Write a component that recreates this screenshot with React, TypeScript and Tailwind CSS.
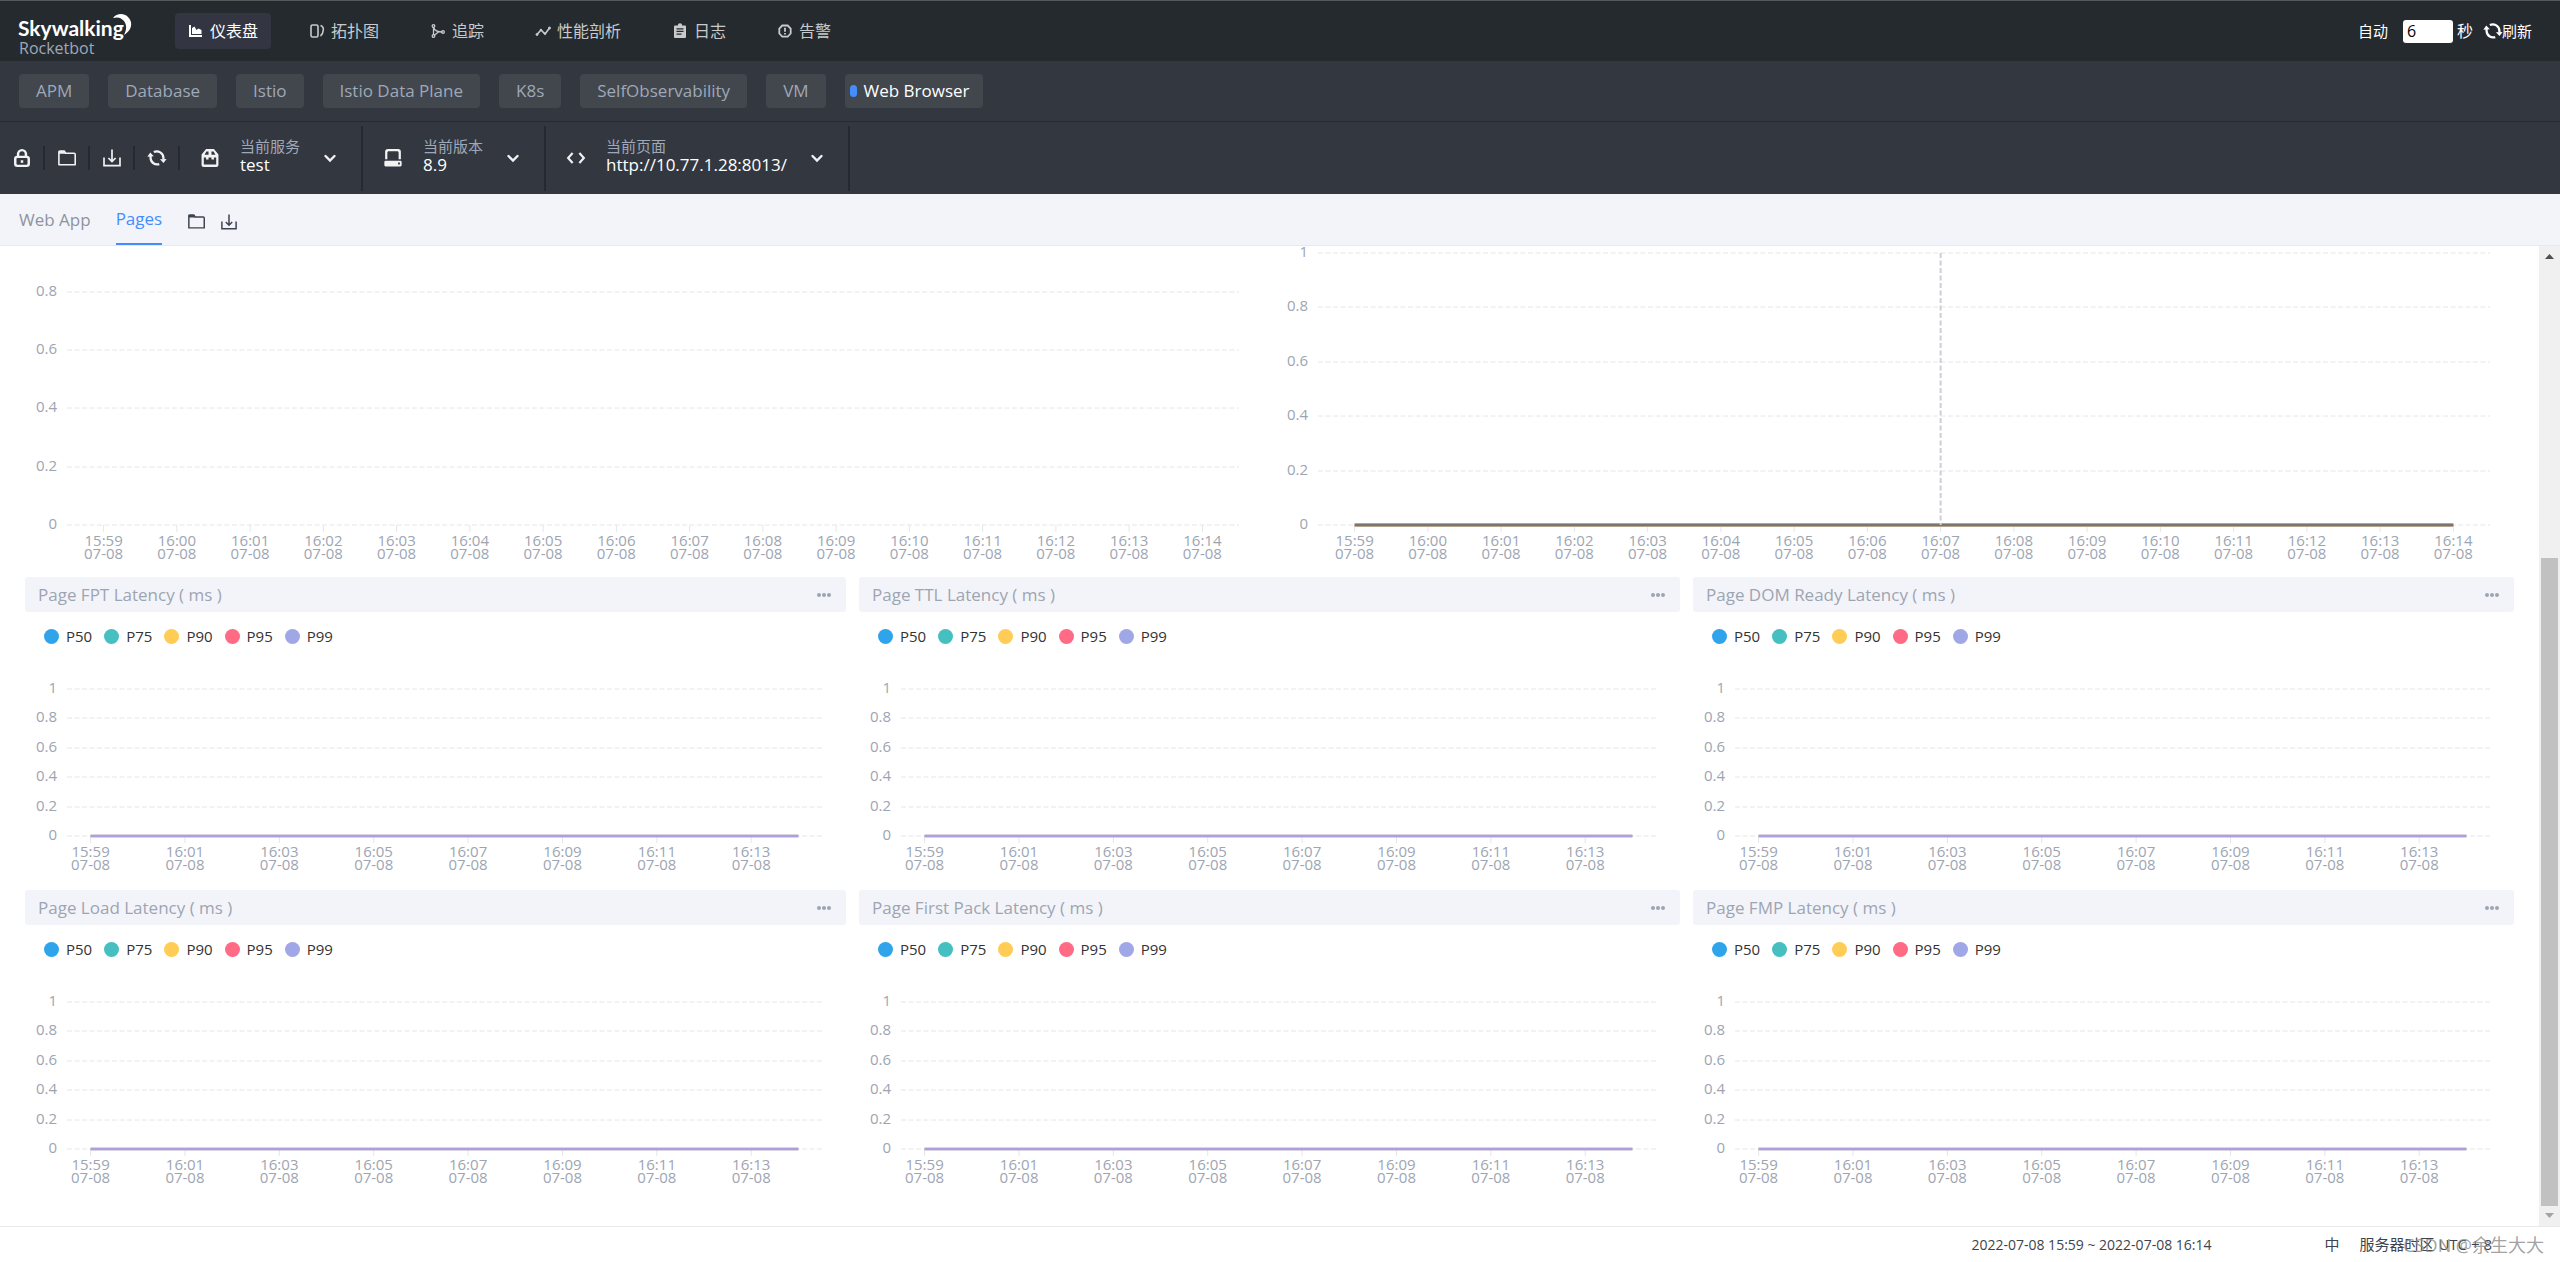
import type { ReactNode } from "react";

const NAV_ITEMS = [
  { label: "仪表盘", icon: "chart", active: true },
  { label: "拓扑图", icon: "topology" },
  { label: "追踪", icon: "trace" },
  { label: "性能剖析", icon: "profile" },
  { label: "日志", icon: "log" },
  { label: "告警", icon: "alarm" },
];

const GROUPS = ["APM", "Database", "Istio", "Istio Data Plane", "K8s", "SelfObservability", "VM", "Web Browser"];

const LEGEND = [
  { name: "P50", color: "bg-[#30a4eb]" },
  { name: "P75", color: "bg-[#45bfc0]" },
  { name: "P90", color: "bg-[#ffcc55]" },
  { name: "P95", color: "bg-[#ff6a84]" },
  { name: "P99", color: "bg-[#a0a7e6]" },
];

const LATENCY_CARDS = [
  "Page FPT Latency ( ms )",
  "Page TTL Latency ( ms )",
  "Page DOM Ready Latency ( ms )",
  "Page Load Latency ( ms )",
  "Page First Pack Latency ( ms )",
  "Page FMP Latency ( ms )",
];

const TIMES = [
  "15:59", "16:00", "16:01", "16:02", "16:03", "16:04", "16:05", "16:06",
  "16:07", "16:08", "16:09", "16:10", "16:11", "16:12", "16:13", "16:14",
];

const ICONS: Record<string, ReactNode> = {
  chart: (
    <g fill="currentColor">
      <path d="M1 2h2v10h11v2H1z" />
      <path d="M4 11V5l2.500 -1.500L8.500 7l2-1.500L13.500 7v4z" />
    </g>
  ),
  topology: (
    <g fill="none" stroke="currentColor" strokeWidth="1.600">
      <rect x="2" y="2" width="7" height="12" rx="1.500" />
      <path d="M11.500 2.500c2.500 .8 3 2.500 2.800 4.500c-.2 2.500-.8 4.500-2.800 6" />
    </g>
  ),
  trace: (
    <g fill="none" stroke="currentColor" strokeWidth="1.300">
      <path d="M3.500 4v8M3.500 4.500c1 3 5 4.500 9 4.500M9 8.500L4 12.500" />
      <circle cx="3.500" cy="3" r="1.300" />
      <circle cx="3.500" cy="13" r="1.300" />
      <circle cx="13" cy="9" r="1.300" />
    </g>
  ),
  profile: (
    <g stroke="currentColor" fill="currentColor">
      <path d="M2 11.500L6 7l4 4 4.500-6" fill="none" strokeWidth="1.600" />
      <circle cx="2" cy="11.500" r="1" />
      <circle cx="6" cy="7" r=".8" />
      <circle cx="10" cy="10.500" r=".8" />
      <circle cx="14.500" cy="5" r="1" />
    </g>
  ),
  log: (
    <path
      fill="currentColor"
      fillRule="evenodd"
      d="M3.200 2.500h2.600a2.200 2.200 0 0 1 4.400 0h2.600c.8 0 1.200.5 1.200 1.200v10c0 .8-.5 1.300-1.200 1.300H3.200c-.8 0-1.200-.5-1.200-1.300v-10c0-.7.5-1.200 1.200-1.200zM4.500 5.200v1.300h7V5.200zm0 2.600v1.300h7V7.800zm0 2.700v1.300h5v-1.300z"
    />
  ),
  alarm: (
    <g fill="none" stroke="currentColor" strokeWidth="1.800">
      <path d="M5.300 2.500h5.400l3 3v5l-3 3.200H5.300l-3-3.200v-5z" />
      <path d="M8 4.800v4M8 10v1.600" />
    </g>
  ),
  lock: (
    <g fill="none" stroke="currentColor" strokeWidth="2.200">
      <rect x="2" y="7" width="12" height="8" rx="1.800" />
      <path d="M4.500 7V4.500a3.500 3.500 0 0 1 7 0v2.500" />
      <path d="M8 10v2.300" />
    </g>
  ),
  folder: (
    <g>
      <path d="M.8 14V2.800c0-.8.3-1 1-1h3.700l1.300 2h7.500c.6 0 1 .3 1 1V14z" fill="none" stroke="currentColor" strokeWidth="1.400" strokeLinejoin="round" />
      <path d="M.8 1.800h4.700l1.300 2.400H.8z" fill="currentColor" />
    </g>
  ),
  download: (
    <g fill="none" stroke="currentColor" strokeWidth="1.500">
      <path d="M.9 7.500V14.800h14.200V7.500M8 .5v10.500M4.800 8L8 11.200 11.200 8" />
    </g>
  ),
  refresh: (
    <g fill="none" stroke="currentColor" strokeWidth="2">
      <path d="M2.300 5.500v2.500a5.800 5.800 0 0 0 7.700 5.400M5.200 2.700a5.900 5.900 0 0 1 8.500 5.300v1.200" />
      <path d="M-.6 6.800L2 3l3.200 3.400zM10.600 9.200l5.900-.4-2.700 3.700z" fill="currentColor" stroke="none" />
    </g>
  ),
  service: (
    <path
      fill="currentColor"
      fillRule="evenodd"
      d="M4.500 0h7l4 4.800V14c0 1.200-.7 2-2 2h-11c-1.300 0-2-.8-2-2V4.800zM4.800 2.200L3.200 5h3.500V2.200zm4.500 0V5h3.500l-1.600-2.800zM2.500 7.500v6.200h11V7.500H11.500v1.800H9.300V7.500H6.700v1.800H4.500V7.500z"
    />
  ),
  version: (
    <path
      fill="currentColor"
      fillRule="evenodd"
      d="M3.500 0h9A2.500 2.500 0 0 1 15 2.500V9h-2V3.500c0-1-.4-1.500-1.300-1.500H4.300C3.400 2 3 2.500 3 3.500V9H1V2.500A2.500 2.500 0 0 1 3.500 0zM1.500 10.500h13c.8 0 1.200.5 1.200 1.200v2.600c0 .8-.4 1.200-1.200 1.200h-13c-.8 0-1.200-.4-1.200-1.200v-2.600c0-.7.4-1.200 1.200-1.200zm11 1.500v1.800h1.600V12z"
    />
  ),
  code: <path d="M5 3.500L1 8l4 4.500M11 3.500L15 8l-4 4.500" fill="none" stroke="currentColor" strokeWidth="1.900" />,
  chevron: <path d="M3.500 6L8 10.500 12.500 6" fill="none" stroke="currentColor" strokeWidth="2.400" strokeLinecap="round" />,
};

function Icon({ name, className = "size-4" }: { name: string; className?: string }) {
  return (
    <svg viewBox="0 0 16 16" className={`shrink-0 overflow-visible ${className}`} aria-hidden="true">
      {ICONS[name]}
    </svg>
  );
}

function Logo() {
  return (
    <div className="w-[156px] shrink-0 pl-[19px]">
      <svg width="116" height="33" viewBox="0 0 116 33" className="block overflow-visible" aria-label="Skywalking">
        <text x="-1" y="29" className="fill-white font-['Lato'] text-[21px] font-bold">Skywalking</text>
        <path d="M94 11C97 7 104 5 109 10C115 16 112 24 105 28C108 22 108 17 104 13C101 10 98 10 94 11z" fill="#fff" />
      </svg>
      <div className="text-base leading-4 text-[#9fa8b8]">Rocketbot</div>
    </div>
  );
}

function Header() {
  return (
    <header className="flex h-[61px] items-center border-t border-[#54595c] bg-[#252a2f] pr-7">
      <Logo />
      <nav className="ml-[19px] flex gap-[25px]">
        {NAV_ITEMS.map((item) => (
          <a
            key={item.label}
            href="#"
            className={`flex h-9 items-center gap-[6px] rounded px-[13px] text-base ${
              item.active ? "bg-[#333642] text-white" : "text-[#c8cacb]"
            }`}
          >
            <Icon name={item.icon} />
            {item.label}
          </a>
        ))}
      </nav>
      <div className="ml-auto flex items-center text-[15px] text-white">
        <button className="mr-[15px]">自动</button>
        <input
          type="text"
          defaultValue="6"
          aria-label="自动刷新间隔"
          className="h-[23px] w-[50px] rounded-[3px] bg-white px-1 text-base text-black"
        />
        <span className="ml-1 text-base">秒</span>
        <button className="ml-[11px] flex items-center">
          <Icon name="refresh" className="size-[18px]" />
          刷新
        </button>
      </div>
    </header>
  );
}

function GroupBar() {
  return (
    <div className="flex h-[61px] gap-[19px] border-b border-[#252a2f] bg-[#333840] px-[19px] pt-[13px] text-[17px]">
      {GROUPS.map((group) =>
        group === "Web Browser" ? (
          <button key={group} className="flex h-[34px] items-center gap-[7px] rounded bg-[#42464d] pr-[13px] pl-[5px] text-white">
            <span className="h-3 w-[7px] rounded-full bg-[#448dfe]" />
            {group}
          </button>
        ) : (
          <button key={group} className="h-[34px] rounded bg-[#42464d] px-[17px] text-[#9fa8b8]">
            {group}
          </button>
        )
      )}
    </div>
  );
}

function Selector({ icon, label, value }: { icon: string; label: string; value: string }) {
  return (
    <button className="flex h-[65px] items-center border-r-2 border-[#252a2f] pr-[23px] pl-[21px] text-left">
      <Icon name={icon} className="size-[18px] text-[#f2f2f2]" />
      <span className="ml-[21px] flex min-w-[60px] flex-col pb-1">
        <span className="text-[15px] leading-[18px] text-[#9fa8b8]">{label}</span>
        <span className="text-[17px] leading-5 text-white">{value}</span>
      </span>
      <Icon name="chevron" className="ml-[22px] size-4 text-[#f2f2f2]" />
    </button>
  );
}

function ToolBar() {
  return (
    <div className="flex h-[72px] items-center bg-[#333840]">
      {["lock", "folder", "download", "refresh"].map((icon) => (
        <button key={icon} aria-label={icon} className="flex h-6 w-[45px] items-center justify-center border-r-2 border-[#252a2f] text-[#f2f2f2]">
          <Icon name={icon} className="size-[18px]" />
        </button>
      ))}
      <Selector icon="service" label="当前服务" value="test" />
      <Selector icon="version" label="当前版本" value="8.9" />
      <Selector icon="code" label="当前页面" value="http://10.77.1.28:8013/" />
    </div>
  );
}

function TabBar() {
  return (
    <div className="flex h-[52px] border-b border-[#e8e9ed] bg-[#f3f4f9] pl-[19px] text-[17px]">
      <button className="mr-[25px] text-[#8e939d]">Web App</button>
      <button className="border-b-2 border-[#448dfe] text-[#448dfe]">Pages</button>
      <button aria-label="folder" className="ml-[26px] pt-1 text-[#3d444f]">
        <Icon name="folder" className="size-[17px]" />
      </button>
      <button aria-label="download" className="ml-4 pt-1 text-[#3d444f]">
        <Icon name="download" />
      </button>
    </div>
  );
}

type PlotProps = {
  zeroY: number;
  stepY: number;
  ticks: string[];
  every?: number;
  series?: "latency" | "views";
  pointer?: number;
};

// x runs in percent so that the plot follows the width of its card
function Plot({ zeroY, stepY, ticks, every = 1, series, pointer }: PlotProps) {
  const slot = 100 / TIMES.length;
  const center = (i: number) => `${(i + 0.5) * slot}%`;
  const top = zeroY - stepY * 5;

  return (
    <svg width="100%" height={zeroY + 40} className="block overflow-visible text-[15px]" aria-hidden="true">
      {ticks.map((tick, i) => {
        const y = Math.round(zeroY - stepY * i);
        return (
          <g key={tick}>
            <line x1="0" x2="100%" y1={y} y2={y} stroke="#e6e6e8" strokeWidth="1" strokeDasharray="5 2.5" />
            <text x="-10" y={y + 4} textAnchor="end" className="fill-[#9da5b2]">{tick}</text>
          </g>
        );
      })}
      {TIMES.map((time, i) =>
        i % every === 0 ? (
          <g key={time}>
            <line x1={center(i)} x2={center(i)} y1={zeroY} y2={zeroY + 7} stroke="#e6e6e8" />
            <text x={center(i)} y={zeroY + 21} textAnchor="middle" className="fill-[#9da5b2]">{time}</text>
            <text x={center(i)} y={zeroY + 34} textAnchor="middle" className="fill-[#9da5b2]">07-08</text>
          </g>
        ) : null
      )}
      {series === "views" && (
        <>
          <line x1={center(0)} x2={center(15)} y1={zeroY} y2={zeroY} stroke="#b5a68c" strokeWidth="4" />
          <line x1={center(0)} x2={center(15)} y1={zeroY} y2={zeroY} stroke="#777777" strokeWidth="2" />
        </>
      )}
      {series === "latency" && (
        <>
          <line x1={center(0)} x2={center(15)} y1={zeroY} y2={zeroY} stroke="#b7aebd" strokeWidth="3" />
          <line x1={center(0)} x2={center(15)} y1={zeroY} y2={zeroY} stroke="#ada0e0" strokeWidth="2" />
        </>
      )}
      {pointer !== undefined && (
        <line x1={center(pointer)} x2={center(pointer)} y1={top} y2={zeroY} stroke="#cdced6" strokeWidth="2" strokeDasharray="5 2.5" />
      )}
    </svg>
  );
}

function LatencyCard({ title }: { title: string }) {
  return (
    <section className="pb-[14px]">
      <div className="flex h-[35px] items-center justify-between rounded-[3px] bg-[#f3f4f9] pr-[15px] pl-[13px]">
        <h2 className="text-[17px] text-[#9da5b2]">{title}</h2>
        <button aria-label="more" className="flex gap-px">
          <span className="size-1 rounded-full bg-[#9da5b2]" />
          <span className="size-1 rounded-full bg-[#9da5b2]" />
          <span className="size-1 rounded-full bg-[#9da5b2]" />
        </button>
      </div>
      <ul className="mt-[14px] flex gap-3 pl-[19px] text-[15px] leading-5 text-[#333]">
        {LEGEND.map((item) => (
          <li key={item.name} className="flex items-center gap-[7px]">
            <span className={`size-[15px] rounded-full ${item.color}`} />
            {item.name}
          </li>
        ))}
      </ul>
      <div className="mt-[34px] pr-6 pl-[42px]">
        <Plot zeroY={156} stepY={29.4} ticks={["0", "0.2", "0.4", "0.6", "0.8", "1"]} every={2} series="latency" />
      </div>
    </section>
  );
}

function ScrollBar() {
  return (
    <div className="flex w-[21px] flex-col items-center bg-[#f0f0f0] pt-2 pb-2" aria-hidden="true">
      <svg width="9" height="5"><path d="M0 5L4.500 0 9 5z" fill="#505050" /></svg>
      <div className="mt-[299px] w-[17px] flex-1 bg-[#c1c1c1]" />
      <svg width="9" height="5" className="mt-[7px]"><path d="M0 0L4.500 5 9 0z" fill="#a3a3a3" /></svg>
    </div>
  );
}

function Footer() {
  return (
    <footer className="relative flex h-9 items-center justify-end border-t border-[#e8e9ed] bg-white pr-[68px] text-[15px] text-[#3d444f]">
      <button className="mr-[113px] text-sm">2022-07-08 15:59 ~ 2022-07-08 16:14</button>
      <button className="mr-5">中</button>
      <span>服务器时区 UTC + 8</span>
      <span className="absolute right-4 text-lg text-[#8a8a8a]/80">CSDN @余生大大</span>
    </footer>
  );
}

export default function App() {
  return (
    <div className="flex min-h-screen flex-col bg-white font-['Open_Sans','Noto_Sans_CJK_SC',sans-serif]">
      <Header />
      <GroupBar />
      <ToolBar />
      <TabBar />
      <div className="flex flex-1">
        <main className="flex-1 overflow-hidden pr-[25px] pl-[25px]">
          <div className="grid grid-cols-2 gap-x-[13px]">
            <div className="pr-6 pl-[42px]">
              <Plot zeroY={279} stepY={58.3} ticks={["0", "0.2", "0.4", "0.6", "0.8"]} />
            </div>
            <div className="pr-6 pl-[42px]">
              <Plot zeroY={279} stepY={54.4} ticks={["0", "0.2", "0.4", "0.6", "0.8", "1"]} series="views" pointer={8} />
            </div>
          </div>
          <div className="mt-3 grid grid-cols-3 gap-x-[13px]">
            {LATENCY_CARDS.map((title) => (
              <LatencyCard key={title} title={title} />
            ))}
          </div>
        </main>
        <ScrollBar />
      </div>
      <Footer />
    </div>
  );
}
